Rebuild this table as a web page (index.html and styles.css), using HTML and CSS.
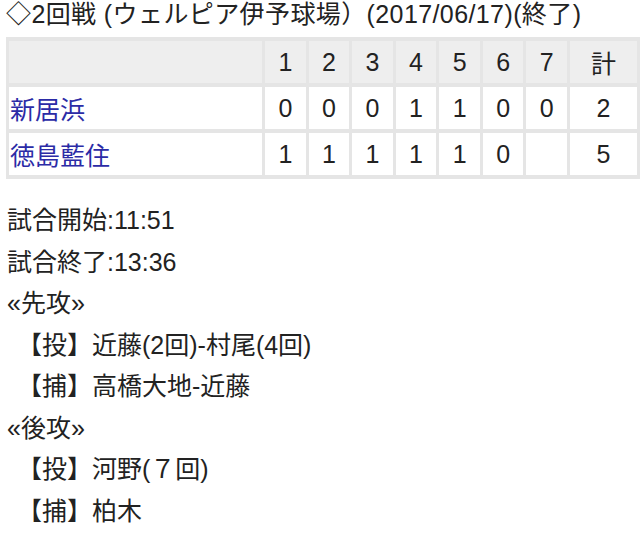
FILE: index.html
```html
<!DOCTYPE html>
<html lang="ja">
<head>
<meta charset="utf-8">
<link rel="stylesheet" href="styles.css">
</head>
<body>
<div class="title">◇2回戦 (ウェルピア伊予球場）(2017/06/17)(終了)</div>
<table class="score">
  <colgroup>
    <col class="c-name"><col class="c-inn"><col class="c-inn"><col class="c-inn"><col class="c-inn"><col class="c-inn"><col class="c-inn"><col class="c-inn"><col class="c-total">
  </colgroup>
  <tr class="head">
    <td></td><td>1</td><td>2</td><td>3</td><td>4</td><td>5</td><td>6</td><td>7</td><td>計</td>
  </tr>
  <tr>
    <td class="team"><a href="#">新居浜</a></td><td>0</td><td>0</td><td>0</td><td>1</td><td>1</td><td>0</td><td>0</td><td>2</td>
  </tr>
  <tr>
    <td class="team"><a href="#">徳島藍住</a></td><td>1</td><td>1</td><td>1</td><td>1</td><td>1</td><td>0</td><td></td><td>5</td>
  </tr>
</table>
<div class="info">
  <div class="line">試合開始:11:51</div>
  <div class="line">試合終了:13:36</div>
  <div class="line">«先攻»</div>
  <div class="line sub">【投】近藤(2回)-村尾(4回)</div>
  <div class="line sub">【捕】高橋大地-近藤</div>
  <div class="line">«後攻»</div>
  <div class="line sub">【投】河野(７回)</div>
  <div class="line sub">【捕】柏木</div>
</div>
</body>
</html>
```

FILE: styles.css
```css
html, body {
  margin: 0;
  padding: 0;
  background: #ffffff;
}
body {
  padding-left: 6px;
  font-family: "Liberation Sans", "Noto Sans CJK JP", sans-serif;
  font-size: 25px;
  color: #222222;
  overflow: hidden;
}
.title {
  height: 37px;
  line-height: 28px;
  white-space: nowrap;
  letter-spacing: 0.4px;
}
.score {
  width: 634px;
  table-layout: fixed;
  border-collapse: separate;
  border-spacing: 3px 4px;
  background: #e5e5e5;
}
.c-name { width: 253px; }
.c-inn { width: 40.5px; }
.c-total { width: 67px; }
.score td {
  height: 42px;
  padding: 0;
  background: #ffffff;
  text-align: center;
  vertical-align: middle;
}
.score .head td {
  background: #eeeeee;
}
.score td.team {
  text-align: left;
  padding-left: 1px;
}
.team a {
  color: #2b2ba6;
  text-decoration: none;
}
.info {
  margin-top: 21px;
  padding-left: 1px;
}
.line {
  line-height: 41.5px;
  white-space: nowrap;
}
.sub {
  padding-left: 10px;
}
```
